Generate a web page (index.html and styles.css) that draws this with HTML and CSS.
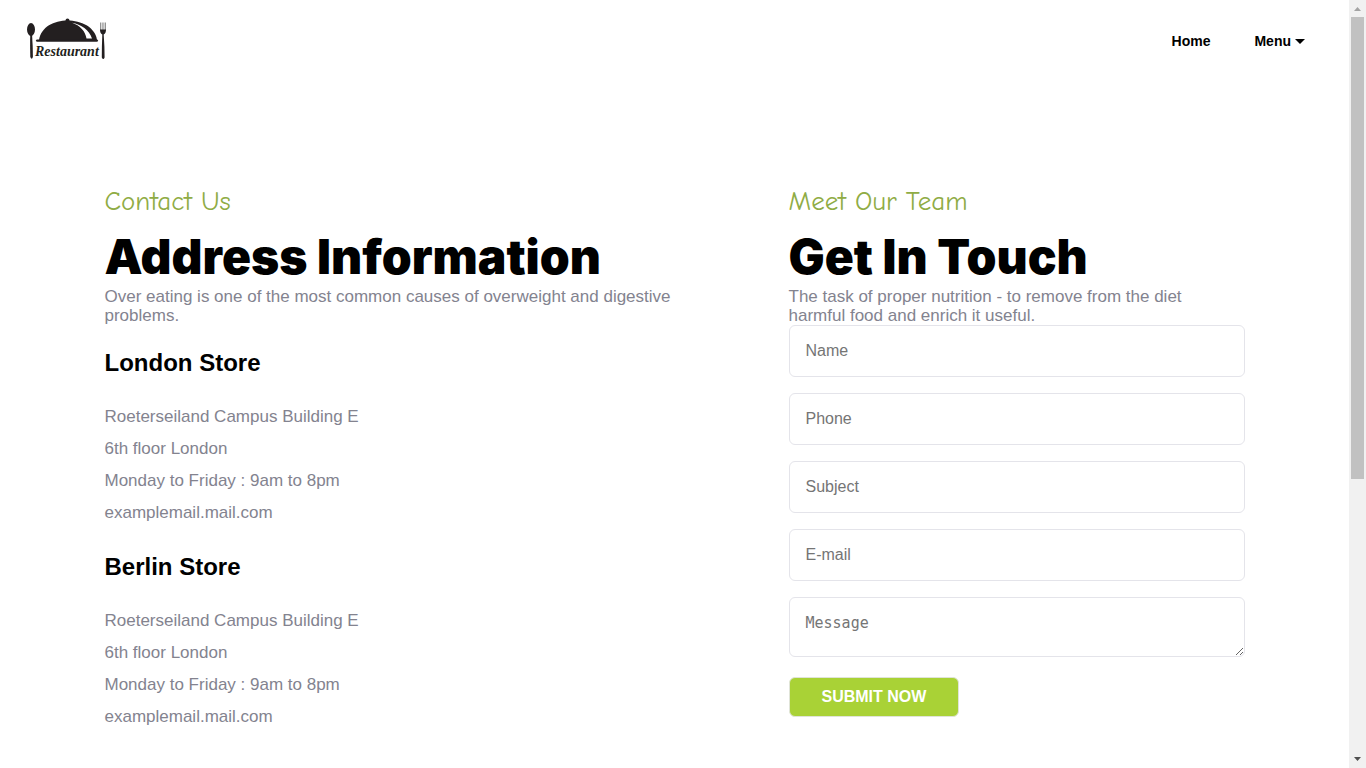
FILE: index.html
```html
<!DOCTYPE html>
<html lang="en">
<head>
<meta charset="utf-8">
<meta name="viewport" content="width=device-width, initial-scale=1">
<title>Restaurant - Contact</title>
<link rel="stylesheet" href="styles.css">
</head>
<body>
<div class="shell">
  <div class="page">
    <header class="site-header">
      <a class="logo" href="#" aria-label="Restaurant">
        <svg width="80" height="46" viewBox="0 0 80 46" fill="#231f20">
          <ellipse cx="4" cy="11.500" rx="4" ry="6.500"/>
          <path d="M3.200 16h1.800l.7 12 .2 11q-1.200 3.500-2.600 0l-.2-11z"/>
          <circle cx="40.500" cy="2.400" r="2"/>
          <path d="M12 22C14 9 27 2.600 40.500 2.600S68 9 70 22z"/>
          <path d="M45 4.800c9 1.500 17.500 7.500 20 15.700h-5.500C58.500 13.500 53 7.500 45 4.800z" fill="#fff"/>
          <rect x="9" y="21.400" width="62" height="2.400" rx="1.200"/>
          <path d="M73.500 4.500v8M75.200 4.500v8M76.900 4.500v8M78.500 4.500v8" stroke="#777" stroke-width=".8" fill="none"/>
          <path d="M73 11.500h6q0 4-2.300 5l.7 12 .2 11q-1.300 3-2.800 0l.1-11 .4-12q-2.300-1-2.300-5z"/>
          <text class="logo-text" x="8" y="38">Restaurant</text>
        </svg>
      </a>
      <nav class="nav">
        <a class="nav-link" href="#">Home</a>
        <a class="nav-link" href="#">Menu
          <svg width="10" height="5" viewBox="0 0 10 5" aria-hidden="true"><path d="M0 0h10L5 5z"/></svg>
        </a>
      </nav>
    </header>
    <main class="contact">
      <section class="address">
        <p class="eyebrow">Contact Us</p>
        <h1 class="title">Address Information</h1>
        <p class="lead">Over eating is one of the most common causes of overweight and digestive problems.</p>
        <h2 class="store-name">London Store</h2>
        <ul class="store-details">
          <li>Roeterseiland Campus Building E</li>
          <li>6th floor London</li>
          <li>Monday to Friday : 9am to 8pm</li>
          <li>examplemail.mail.com</li>
        </ul>
        <h2 class="store-name">Berlin Store</h2>
        <ul class="store-details">
          <li>Roeterseiland Campus Building E</li>
          <li>6th floor London</li>
          <li>Monday to Friday : 9am to 8pm</li>
          <li>examplemail.mail.com</li>
        </ul>
      </section>
      <section class="touch">
        <p class="eyebrow">Meet Our Team</p>
        <h1 class="title">Get In Touch</h1>
        <p class="lead lead-narrow">The task of proper nutrition - to remove from the diet harmful food and enrich it useful.</p>
        <form class="form">
          <input class="field" type="text" placeholder="Name" aria-label="Name">
          <input class="field" type="tel" placeholder="Phone" aria-label="Phone">
          <input class="field" type="text" placeholder="Subject" aria-label="Subject">
          <input class="field" type="email" placeholder="E-mail" aria-label="E-mail">
          <textarea class="field message" placeholder="Message" aria-label="Message"></textarea>
          <button class="submit" type="submit">SUBMIT NOW</button>
        </form>
      </section>
    </main>
  </div>
  <div class="scrollbar" aria-hidden="true">
    <svg class="arrow" viewBox="0 0 17 17"><path d="M5 11h7L8.500 7z" fill="#a3a3a3"/></svg>
    <div class="track"><div class="thumb"></div></div>
    <svg class="arrow" viewBox="0 0 17 17"><path d="M5 6h7L8.500 10z" fill="#505050"/></svg>
  </div>
</div>
</body>
</html>
```
FILE: styles.css
```css
* { box-sizing: border-box; margin: 0; padding: 0; }

body {
  font-family: "Liberation Sans", Arial, sans-serif;
  font-size: 17px;
  color: #000;
  background: #fff;
}

.shell { display: flex; height: 100vh; overflow: hidden; }
.page { flex: 1; min-width: 0; overflow: hidden; }

.site-header {
  display: flex;
  align-items: center;
  justify-content: space-between;
  padding: 18px 44px 18px 27px;
}
.logo, .logo svg { display: block; }
.logo-text { font: italic bold 14px "Liberation Serif", serif; }
.nav { display: flex; gap: 44px; }
.nav-link {
  display: flex;
  align-items: center;
  gap: 4px;
  font-size: 14px;
  font-weight: bold;
  color: #000;
  text-decoration: none;
}

.contact {
  display: grid;
  grid-template-columns: 3fr 2fr;
  max-width: 1140px;
  margin: 102px auto 0;
}
.address { padding-right: 96px; }

.eyebrow {
  font-family: "Comic Sans MS", "Comic Neue", Lato, cursive;
  font-size: 27px;
  line-height: 36px;
  color: #8fac45;
}
.title {
  margin-top: 8px;
  font-family: "Arial Black", Inter, sans-serif;
  font-size: 48px;
  font-weight: 900;
  line-height: 58px;
  white-space: nowrap;
}
.lead { margin-top: 1px; line-height: 19px; color: #83838f; }
.lead-narrow { max-width: 416px; }

.store-name { margin-top: 24px; font-size: 24px; line-height: 28px; }
.store-details {
  margin-top: 24px;
  line-height: 32px;
  list-style: none;
  color: #83838f;
}

.form { display: flex; flex-direction: column; align-items: flex-start; gap: 16px; }
.field {
  width: 100%;
  height: 52px;
  padding: 0 16px;
  border: 1px solid #e4e4ea;
  border-radius: 6px;
  background: #fff;
  font-family: inherit;
  font-size: 16px;
}
.field::placeholder { color: #757575; }
.message {
  display: block;
  height: 60px;
  padding: 16px;
  font-family: Consolas, "DejaVu Sans Mono", monospace;
  font-size: 15px;
  overflow: hidden;
  resize: both;
}
.submit {
  height: 40px;
  margin-top: 4px;
  padding: 0 32px;
  border: 1px solid #e0e4d8;
  border-radius: 6px;
  background: #a9d236;
  color: #fff;
  font-family: inherit;
  font-size: 16px;
  font-weight: bold;
}

.scrollbar { display: flex; flex-direction: column; width: 17px; background: #f1f1f1; }
.arrow { width: 17px; height: 17px; }
.track { flex: 1; padding: 0 2px; }
.thumb { height: 63%; background: #c1c1c1; }
```
